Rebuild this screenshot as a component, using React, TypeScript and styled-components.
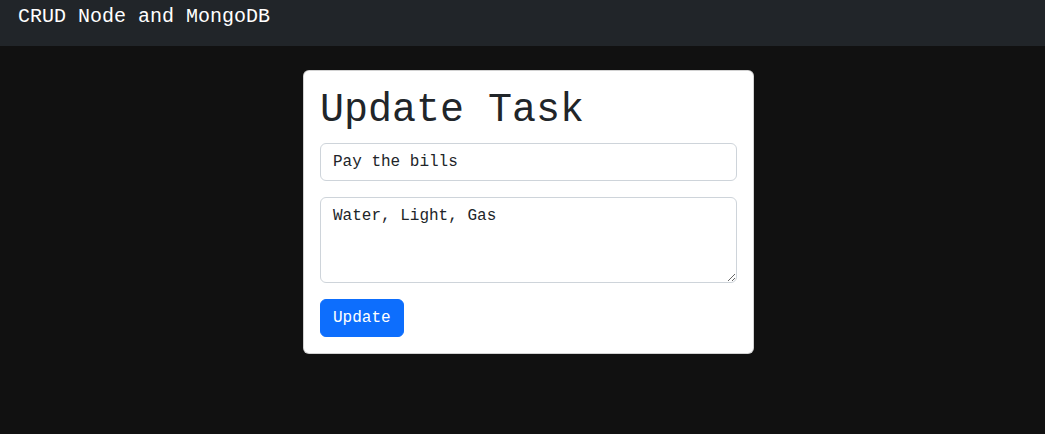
import React, { useState } from 'react';
import styled, { createGlobalStyle } from 'styled-components';

const GlobalStyle = createGlobalStyle`
  * {
    box-sizing: border-box;
  }
  html, body {
    margin: 0;
    padding: 0;
    background-color: #111111;
    font-family: 'Liberation Mono', 'DejaVu Sans Mono', monospace;
    color: #212529;
  }
`;

const Navbar = styled.nav`
  display: flex;
  align-items: flex-start;
  height: 46px;
  padding: 2px 18px 0;
  background-color: #212529;
`;

const Brand = styled.a`
  color: #fff;
  font-size: 20px;
  line-height: 30px;
  text-decoration: none;
`;

const Main = styled.main`
  display: flex;
  justify-content: center;
  padding: 24px 0 0 12px;
`;

const Card = styled.form`
  display: flex;
  flex-direction: column;
  width: 451px;
  padding: 16px;
  background-color: #fff;
  border: 1px solid rgba(0, 0, 0, 0.175);
  border-radius: 6px;
`;

const Title = styled.h1`
  margin: 0 0 8px;
  font-size: 40px;
  font-weight: 500;
  line-height: 48px;
`;

const fieldStyles = `
  display: block;
  width: 100%;
  padding: 6px 12px;
  font-family: 'Liberation Mono', 'DejaVu Sans Mono', monospace;
  font-size: 16px;
  line-height: 24px;
  color: #212529;
  background-color: #fff;
  border: 1px solid #ced4da;
  border-radius: 6px;
  margin-bottom: 16px;
  outline: none;
`;

const Input = styled.input`
  ${fieldStyles}
  height: 38px;
`;

const TextArea = styled.textarea`
  ${fieldStyles}
  height: 86px;
  resize: vertical;
`;

const Button = styled.button`
  align-self: flex-start;
  padding: 6px 12px;
  font-family: 'Liberation Mono', 'DejaVu Sans Mono', monospace;
  font-size: 16px;
  line-height: 24px;
  color: #fff;
  background-color: #0d6efd;
  border: 1px solid #0d6efd;
  border-radius: 6px;
  cursor: pointer;
`;

export default function App() {
  const [title, setTitle] = useState('Pay the bills');
  const [description, setDescription] = useState('Water, Light, Gas');

  return (
    <>
      <GlobalStyle />
      <Navbar>
        <Brand href="#">CRUD Node and MongoDB</Brand>
      </Navbar>
      <Main>
        <Card onSubmit={e => e.preventDefault()}>
          <Title>Update Task</Title>
          <Input value={title} onChange={e => setTitle(e.target.value)} />
          <TextArea rows={3} value={description} onChange={e => setDescription(e.target.value)} />
          <Button type="submit">Update</Button>
        </Card>
      </Main>
    </>
  );
}
